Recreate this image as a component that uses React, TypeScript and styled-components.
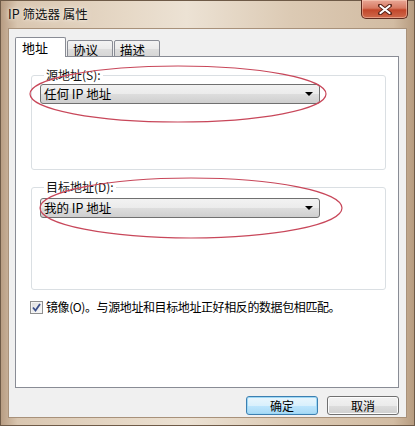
import styled, { createGlobalStyle } from "styled-components";

const GlobalStyle = createGlobalStyle`
  * { box-sizing: border-box; }
  body {
    margin: 0;
    background: #ffffff;
  }
`;

const Window = styled.div`
  position: relative;
  width: 415px;
  height: 426px;
  display: flex;
  flex-direction: column;
  padding: 0 7px 7px 7px;
  border: 1px solid #6e5a47;
  background: linear-gradient(to right, #b89d83 0%, #d9c6b0 4%, #e6d8c6 30%, #ece2d4 45%, #dccab4 70%, #d2bca3 95%, #b79c80 100%);
  font-family: "Noto Sans CJK SC", "Noto Sans", sans-serif;
  font-size: 12px;
  color: #000;
`;

const TitleBar = styled.div`
  height: 27px;
  display: flex;
  align-items: flex-start;
`;

const Title = styled.span`
  padding-top: 5px;
  line-height: 16px;
  font-size: 12.5px;
  color: #111;
  text-shadow: 0 0 6px #f6efe6, 0 0 3px #f6efe6;
`;

const CloseButton = styled.div`
  margin-left: auto;
  margin-top: -1px;
  margin-right: -1px;
  width: 47px;
  height: 19px;
  display: flex;
  align-items: center;
  justify-content: center;
  border: 1px solid #5e2b1f;
  border-top: none;
  border-radius: 0 0 5px 5px;
  background: linear-gradient(#e9a796 0%, #d77a62 45%, #c2472b 55%, #cf6a4c 100%);
  box-shadow: inset 0 0 0 1px rgba(255, 220, 200, 0.45);
`;

const Client = styled.div`
  flex: 1;
  display: flex;
  flex-direction: column;
  padding: 8px 6px 0 6px;
  background: #f0f0f0;
  border: 1px solid #a8917a;
`;

const TabRow = styled.div`
  display: flex;
  align-items: flex-end;
  gap: 1px;
  height: 20px;
  margin-bottom: -1px;
  position: relative;
  z-index: 1;
`;

const Tab = styled.div<{ $active?: boolean; $w: number }>`
  width: ${(p) => p.$w}px;
  height: ${(p) => (p.$active ? 20 : 17)}px;
  padding: ${(p) => (p.$active ? "2px 0 0 6px" : "1px 0 0 5px")};
  line-height: 16px;
  border: 1px solid #898c95;
  border-bottom: ${(p) => (p.$active ? "none" : "1px solid #898c95")};
  border-radius: 2px 2px 0 0;
  font-size: ${(p) => (p.$active ? 13 : 12.5)}px;
  background: ${(p) =>
    p.$active ? "#ffffff" : "linear-gradient(#f3f3f3 0%, #ebebeb 50%, #dedede 51%, #d6d6d6 100%)"};
`;

const Panel = styled.div`
  width: 384px;
  height: 332px;
  display: flex;
  flex-direction: column;
  padding: 10px 12px 0 15px;
  background: #ffffff;
  border: 1px solid #898c95;
`;

const Group = styled.fieldset<{ $h: number; $pt: number; $mt?: number }>`
  margin: ${(p) => p.$mt ?? 0}px 0 0 0;
  height: ${(p) => p.$h}px;
  padding: ${(p) => p.$pt}px 0 0 8px;
  border: 1px solid #dadfe3;
  border-radius: 3px;
  min-width: 0;
`;

const Legend = styled.legend`
  margin-left: 4px;
  padding: 0 2px;
  line-height: 16px;
  color: #111;
`;

const Select = styled.div`
  width: 280px;
  height: 20px;
  display: flex;
  align-items: center;
  justify-content: space-between;
  padding: 0 6px 0 3px;
  border: 1px solid #707070;
  border-radius: 3px;
  background: linear-gradient(#f2f2f2 0%, #ebebeb 50%, #dddddd 51%, #cfcfcf 100%);
  white-space: pre;
  line-height: 16px;
  font-size: 12.5px;
`;

const Arrow = styled.span`
  width: 0;
  height: 0;
  border-left: 4px solid transparent;
  border-right: 4px solid transparent;
  border-top: 4px solid #000;
`;

const CheckRow = styled.label`
  display: flex;
  align-items: center;
  gap: 3px;
  margin: 9px 0 0 -1px;
  line-height: 16px;
  letter-spacing: -0.4px;
`;

const CheckBox = styled.span`
  width: 13px;
  height: 13px;
  display: flex;
  align-items: center;
  justify-content: center;
  border: 1px solid #8f8f8f;
  background: linear-gradient(135deg, #dcdcdc, #fbfbfb);
  box-shadow: inset 0 0 0 1px #f4f4f4;
`;

const Footer = styled.div`
  display: flex;
  justify-content: flex-end;
  gap: 9px;
  margin-top: 8px;
  padding-right: 1px;
`;

const Button = styled.div<{ $default?: boolean }>`
  width: 72px;
  height: 19px;
  display: flex;
  align-items: center;
  justify-content: center;
  line-height: 16px;
  border-radius: 3px;
  border: 1px solid ${(p) => (p.$default ? "#3c7fb1" : "#707070")};
  background: ${(p) =>
    p.$default
      ? "linear-gradient(#eaf6fd 0%, #d9f0fc 50%, #bee6fd 51%, #a7d9f5 100%)"
      : "linear-gradient(#f2f2f2 0%, #ebebeb 50%, #dddddd 51%, #cfcfcf 100%)"};
  box-shadow: ${(p) => (p.$default ? "inset 0 0 0 1px #9ed8f5" : "inset 0 0 0 1px #fcfcfc")};
`;

const Marks = styled.svg`
  position: absolute;
  left: -1px;
  top: -1px;
  pointer-events: none;
`;

function App() {
  return (
    <>
      <GlobalStyle />
      <Window>
        <TitleBar>
          <Title>IP 筛选器 属性</Title>
          <CloseButton>
            <svg width="14" height="11" viewBox="0 0 14 11">
              <path d="M2 1.5 L12 9.5 M12 1.5 L2 9.5" stroke="#5a2418" strokeWidth="4" strokeLinecap="round" />
              <path d="M2.5 2 L11.5 9 M11.5 2 L2.5 9" stroke="#ffffff" strokeWidth="2.2" strokeLinecap="round" />
            </svg>
          </CloseButton>
        </TitleBar>
        <Client>
          <TabRow>
            <Tab $active $w={51}>地址</Tab>
            <Tab $w={46}>协议</Tab>
            <Tab $w={46}>描述</Tab>
          </TabRow>
          <Panel>
            <Group $h={103} $pt={1}>
              <Legend>源地址(S):</Legend>
              <Select>
                <span>任何 IP 地址</span>
                <Arrow />
              </Select>
            </Group>
            <Group $h={111} $pt={3} $mt={9}>
              <Legend>目标地址(D):</Legend>
              <Select>
                <span>我的 IP 地址</span>
                <Arrow />
              </Select>
            </Group>
            <CheckRow>
              <CheckBox>
                <svg width="9" height="9" viewBox="0 0 9 9">
                  <path d="M1 4.5 L3.5 7.5 L8 1" stroke="#3b4f8a" strokeWidth="1.8" fill="none" />
                </svg>
              </CheckBox>
              <span>镜像(O)。与源地址和目标地址正好相反的数据包相匹配。</span>
            </CheckRow>
          </Panel>
          <Footer>
            <Button $default>确定</Button>
            <Button>取消</Button>
          </Footer>
        </Client>
        <Marks width="415" height="426" viewBox="0 0 415 426">
          <ellipse cx="178" cy="94" rx="148" ry="28" fill="none" stroke="#c8475a" strokeWidth="1.2" />
          <ellipse cx="191" cy="208" rx="151" ry="30" fill="none" stroke="#c8475a" strokeWidth="1.2" />
        </Marks>
      </Window>
    </>
  );
}

export default App;
